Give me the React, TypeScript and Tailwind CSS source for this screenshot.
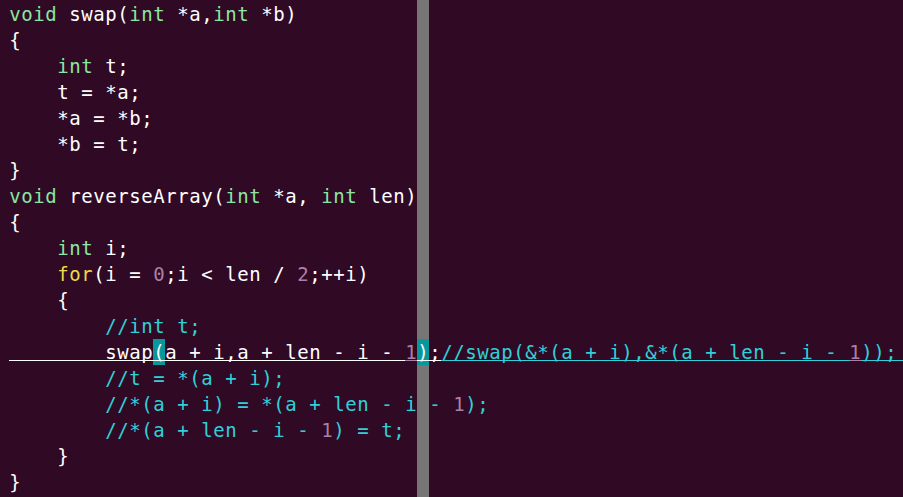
type Seg = [string, string];

const colors: Record<string, string> = {
  n: "text-white",
  t: "text-[#8ae6a2]",
  s: "text-[#efd94a]",
  c: "text-[#ad7fa8]",
  m: "text-[#30d0d8]",
};

const code: Seg[][] = [
  [["void", "t"], [" swap(", "n"], ["int", "t"], [" *a,", "n"], ["int", "t"], [" *b)", "n"]],
  [["{", "n"]],
  [["    ", "n"], ["int", "t"], [" t;", "n"]],
  [["    t = *a;", "n"]],
  [["    *a = *b;", "n"]],
  [["    *b = t;", "n"]],
  [["}", "n"]],
  [["void", "t"], [" reverseArray(", "n"], ["int", "t"], [" *a, ", "n"], ["int", "t"], [" len)", "n"]],
  [["{", "n"]],
  [["    ", "n"], ["int", "t"], [" i;", "n"]],
  [["    ", "n"], ["for", "s"], ["(i = ", "n"], ["0", "c"], [";i < len / ", "n"], ["2", "c"], [";++i)", "n"]],
  [["    {", "n"]],
  [["        ", "n"], ["//int t;", "m"]],
  [
    ["        swap(a + i,a + len - i - ", "n"],
    ["1", "c"],
    [");", "n"],
    ["//swap(&*(a + i),&*(a + len - i - ", "m"],
    ["1", "c"],
    ["));", "m"],
  ],
  [["        ", "n"], ["//t = *(a + i);", "m"]],
  [["        ", "n"], ["//*(a + i) = *(a + len - i - ", "m"], ["1", "c"], [");", "m"]],
  [["        ", "n"], ["//*(a + len - i - ", "m"], ["1", "c"], [") = t;", "m"]],
  [["    }", "n"]],
  [["}", "n"]],
  [],
];

const CURSOR_ROW = 13;
const COLOR_COL = 34;
const MATCH = [12, 34];

function Row({ segs, index }: { segs: Seg[]; index: number }) {
  const cells: { ch: string; c: string }[] = [];
  segs.forEach(([text, c]) => {
    for (const ch of text) cells.push({ ch, c });
  });
  while (cells.length <= COLOR_COL) cells.push({ ch: " ", c: "n" });
  const cursor = index === CURSOR_ROW;

  return (
    <div className="flex h-[26px]">
      {cells.map((cell, i) => {
        let bg = "";
        if (i === COLOR_COL) bg = "bg-[#767676]";
        if (cursor && MATCH.includes(i)) bg = "bg-[#06989a]";
        return (
          <div key={i} className={`h-[26px] w-[12px] shrink-0 ${bg}`}>
            <div
              className={`h-[22px] whitespace-pre text-center leading-[26px] ${colors[cell.c]} ${
                cursor ? "border-b border-current" : ""
              }`}
            >
              {cell.ch}
            </div>
          </div>
        );
      })}
      {cursor && (
        <div className="h-[26px] flex-1">
          <div className="h-[22px] border-b border-[#30d0d8]" />
        </div>
      )}
    </div>
  );
}

export default function App() {
  return (
    <div className="h-screen overflow-hidden bg-[#300a24] pl-[9px] font-['DejaVu_Sans_Mono',monospace] text-[19px]">
      {/* sliver of the row above, so the color column reaches the top edge */}
      <div className="flex h-[1px]">
        <div className="w-[408px] shrink-0" />
        <div className="w-[12px] shrink-0 bg-[#767676]" />
      </div>
      {code.map((segs, i) => (
        <Row key={i} segs={segs} index={i} />
      ))}
    </div>
  );
}
